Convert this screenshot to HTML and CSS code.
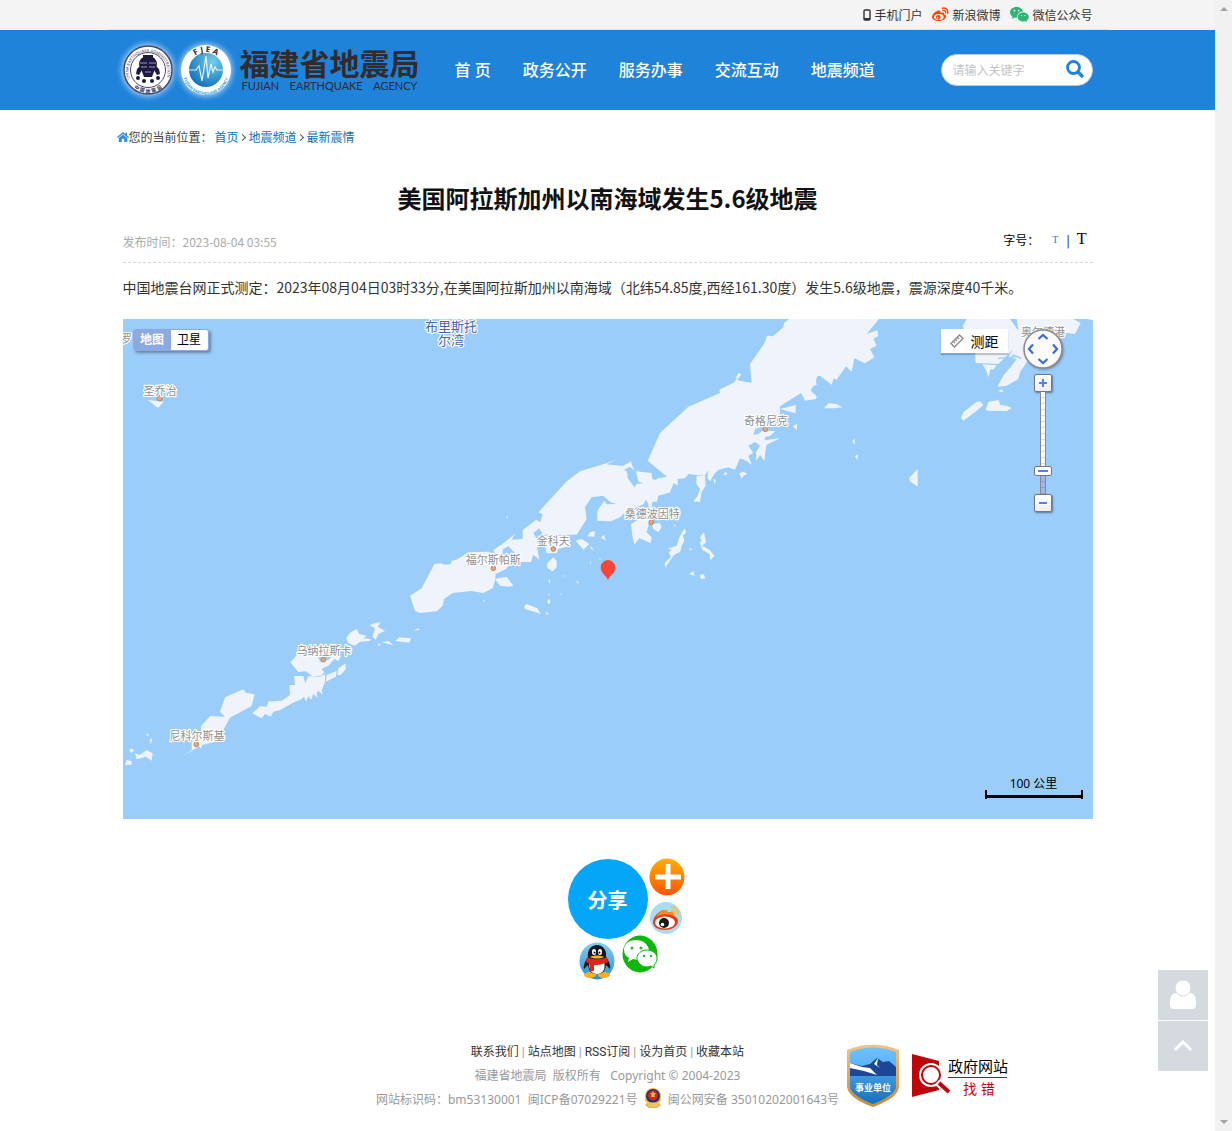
FILE: index.html
```html
<!DOCTYPE html>
<html lang="zh-CN">
<head>
    <meta charset="UTF-8">
    <meta name="viewport" content="width=device-width, initial-scale=1.0">
    <title>美国阿拉斯加州以南海域发生5.6级地震</title>
    <link rel="stylesheet" href="styles.css">
</head>
<body>
    <div class="page">
        <div class="topbar">
            <div class="wrap topbar-links">
                <a href="#"><svg width="8" height="12" viewBox="0 0 8 12"><rect x="1" y="1" width="6" height="10" rx="1" fill="none" stroke="#333" stroke-width="1.4"/><path d="M1 10h6" stroke="#333" stroke-width="2"/></svg>手机门户</a>
                <a href="#"><svg width="17" height="15" viewBox="0 0 17 15"><path d="M6.500 3.500C3.500 4 0 7.500 0 10c0 2.500 3.500 4 7 4 4 0 7-2.500 7-4.500 0-1.300-1-2-2-2.200.5-1.500-.5-2.300-3.500-1.200C9 4.300 8.200 3.200 6.500 3.500z" fill="#f40"/><ellipse cx="6.800" cy="10" rx="4.900" ry="3.100" fill="#f4f4f4"/><circle cx="6.200" cy="10.300" r="2.300" fill="#f40"/><circle cx="5.600" cy="10.700" r=".8" fill="#fff"/><path d="M10.500 1.200c3-.8 6 1.500 5.200 5M11 3.500c1.700-.4 3 .8 2.600 2.400" fill="none" stroke="#f40" stroke-width="1.400" stroke-linecap="round"/></svg>新浪微博</a>
                <a href="#"><svg width="19" height="16" viewBox="0 0 19 16"><path d="M6.500 0C2.800 0 0 2.300 0 5.300c0 1.800 1 3.200 2.500 4.200L1.800 12l2.700-1.500c.8.2 1.500.3 2.500.3C7 7 9.500 4.500 13 4.500 12.500 1.800 9.800 0 6.500 0z" fill="#2bb673"/><path d="M13.200 5.400c-3 0-5.500 2-5.500 4.500s2.500 4.500 5.500 4.500c.7 0 1.300-.1 1.900-.3l2 1.100-.5-1.900c1.300-.9 2.200-2 2.200-3.400 0-2.500-2.600-4.500-5.600-4.500z" fill="#2bb673"/><g fill="#f4f4f4"><circle cx="4.500" cy="3.700" r=".9"/><circle cx="8.700" cy="3.700" r=".9"/><circle cx="11.500" cy="8.600" r=".7"/><circle cx="15" cy="8.600" r=".7"/></g></svg>微信公众号</a>
            </div>
        </div>

        <header class="header">
            <div class="wrap header-inner">
                <a class="logo" href="#">
                    <svg class="seals" width="124" height="68" viewBox="0 0 124 68">
                        <defs>
                            <radialGradient id="glow"><stop offset=".7" stop-color="#b9dbf8" stop-opacity=".9"/><stop offset="1" stop-color="#1f83da" stop-opacity="0"/></radialGradient>
                            <radialGradient id="globe" cx=".7" cy=".25" r=".8"><stop offset="0" stop-color="#72cdec"/><stop offset="1" stop-color="#1573ba"/></radialGradient>
                            <path id="ring-a" d="M14 43A19.500 19.500 0 1 1 50 43"/>
                            <path id="ring-b" d="M12 45A23 23 0 0 0 52 45"/>
                            <path id="ring-c" d="M72 29A19 19 0 0 1 108 29"/>
                            <path id="ring-d" d="M67 36A23 23 0 0 0 113 36"/>
                        </defs>
                        <circle cx="32" cy="34" r="33" fill="url(#glow)"/>
                        <circle cx="90" cy="34" r="33" fill="url(#glow)"/>
                        <circle cx="32" cy="34" r="24" fill="#fff" stroke="#4a4668" stroke-width="1.500"/>
                        <circle cx="32" cy="34" r="17.500" fill="#fff" stroke="#4a4668"/>
                        <g fill="#1d1a42">
                            <ellipse cx="32" cy="28" rx="9" ry="8"/>
                            <path d="M27 19h10v4H27zM25 33h14l-3 8h-8z"/>
                            <path d="M21 33l3-3 2 4-3 5-3-1zM43 33l-3-3-2 4 3 5 3-1z"/>
                            <circle cx="22" cy="42" r="2"/><circle cx="28" cy="45" r="2"/><circle cx="36" cy="45" r="2"/><circle cx="42" cy="42" r="2"/>
                        </g>
                        <path d="M24 27h7M33 27h7M25 31h6M33 31h6M29 36h6" stroke="#9a98b5"/>
                        <text class="seal-text"><textPath href="#ring-a">CHINA EARTHQUAKE ADMINISTRATION</textPath></text>
                        <text class="seal-cn"><textPath href="#ring-b" startOffset="50%">中 国 地 震 局</textPath></text>
                        <circle cx="90" cy="34" r="25" fill="#fff"/>
                        <circle cx="90" cy="34" r="17" fill="url(#globe)"/>
                        <path d="M73 34h7l3-4 3 15 4-25 2 22 3-14 2 8 2-5 2 3h7" fill="none" stroke="#e4f5fc" stroke-width="1.200"/>
                        <text class="seal-fjea"><textPath href="#ring-c" startOffset="50%">F J E A</textPath></text>
                        <text class="seal-blue"><textPath href="#ring-d" startOffset="50%">FUJIAN EARTHQUAKE AGENCY</textPath></text>
                    </svg>
                    <span class="logo-name">
                        <span class="logo-cn">福建省地震局</span>
                        <span class="logo-en"><span>FUJIAN</span> <span>EARTHQUAKE</span> <span>AGENCY</span></span>
                    </span>
                </a>
                <nav class="nav">
                    <a href="#">首 页</a>
                    <a href="#">政务公开</a>
                    <a href="#">服务办事</a>
                    <a href="#">交流互动</a>
                    <a href="#">地震频道</a>
                </nav>
                <form class="search">
                    <input type="text" placeholder="请输入关键字" aria-label="请输入关键字">
                    <button type="button" aria-label="搜索"><svg width="18" height="18" viewBox="0 0 18 18"><circle cx="7.500" cy="7.500" r="6" fill="none" stroke="#1f83da" stroke-width="2.800"/><path d="M12 12l4 4" stroke="#1f83da" stroke-width="3.200" stroke-linecap="round"/></svg></button>
                </form>
            </div>
        </header>

        <main class="wrap">
            <div class="crumbs">
                <svg width="12" height="10" viewBox="0 0 12 10"><path d="M6 0l2.500 2V.8H10v2.500L12 5l-.8.9L6 1.700.8 5.900 0 5z" fill="#2f8ee5"/><path d="M6 2.600l4.200 3.400v4H7.200V6.800H4.800V10H1.800V6z" fill="#2f8ee5"/></svg>
                <span>您的当前位置：</span>
                <a href="#">首页</a><i></i><a href="#">地震频道</a><i></i><a href="#">最新震情</a>
            </div>

            <article class="article">
                <h1>美国阿拉斯加州以南海域发生5.6级地震</h1>
                <div class="meta">
                    <span class="date">发布时间：2023-08-04 03:55</span>
                    <span class="size">字号：<button type="button" class="small">T</button>|<button type="button" class="big">T</button></span>
                </div>
                <p>中国地震台网正式测定：2023年08月04日03时33分,在美国阿拉斯加州以南海域（北纬54.85度,西经161.30度）发生5.6级地震，震源深度40千米。</p>

                <div class="map">
                    <svg class="map-canvas" viewBox="0 0 2910 1500">
                        <rect width="2910" height="1500" fill="#9acdf9"/>
                        <g fill="#eff3fb">
                            <path d="M75 243l47 5-17 19z"/>
                            <!-- peninsula, north part -->
                            <path d="M1574 425L1611 342 1696 263 1791 222 1789 212 1834 190 1841 178 1848 185 1886 191 1881 135 1926 70 1932 50 1950 52 1981 25 1983 12 1998 0H2268L2231 45 2263 34 2266 50 2251 60 2261 80 2241 90 2254 115 2226 133 2194 118 2186 158 2169 142 2141 182 2132 178 2126 197 2091 170 2083 172 2079 184 2081 197 2070 202 2063 215 2081 232 2079 240 2046 245 2034 222 1971 262V288L1936 292 1926 318 1897 330 1891 347 1906 345 1918 335 1957 336 1940 352 1927 353 1926 364 1972 357 1930 378 1924 426 1912 408 1900 425 1899 400 1911 380 1896 369 1876 380 1891 402 1876 410 1886 438 1870 425 1851 418 1836 452 1816 445 1788 452 1776 462 1761 487 1753 478 1755 454 1745 470 1696 465 1686 478 1664 480 1664 500 1652 492 1641 520 1601 528 1605 540 1585 553 1588 580 1569 540 1558 556 1500 565 1540 495 1586 490 1605 478 1632 473z"/>
                            <g transform="translate(831 0)">
                                <!-- peninsula, middle part -->
                                <path d="M415 580L500 487 540 457 612 435 650 422 620 436 668 441 693 427 697 440 704 455 690 443 672 452 681 458 683 477 705 507 712 495 727 510 728 492 715 488 708 457 755 462 757 480 790 490 810 500V520L775 530 770 550 757 545 752 580 740 540 730 556 675 580 660 595 633 607 592 605V575L613 545 620 556 650 555 632 550 610 530 575 535 555 565 560 600 530 647H430L412 620 420 612 428 585z"/>
                                <path d="M890 470h25l2 30-12 20-5 28h-20l13-18 7-20-11-15zM940 480l7 2-2 15zM970 468l6-10 8 8zM1018 463l14-5 10 7-12 5-5 10z"/>
                                <path d="M30 830l35-22 38-73 17-2 15 4 18-2 2-10 15-3 35-22 60-2 25 17 40 20-12 15-31 15-2 20-7 23-28 14-35-6-57 6-26 18-4 20-18 17-50 5-15-6zM280 693l30-20 35-28-10 17 33-2v-28l15-10 25-20 20 12-12 15-16 13 12 20v25l6 35-18-15-7 22h-33l-15-27-20-20-15 8-13 40z"/>
                                <path d="M412 650h88l12 30-37 10-5 13h-30l-5-23zM440 735l20-20 10 10v20l-12 12-16-10zM285 780l35-7 20 27-15 3-25-3zM527 665l18-5 23 15-18 17zM562 652l8-12 15-3-2 16zM603 655l10-7 4 17zM570 680l12 12-9-1z"/>
                                <path d="M372 862l8-7 32 13 10 16-47-14zM693 615l57-35-5 40-5 20 15 15-3 17-34-14-15 19-6-27zM755 615l25-3 5 13-10 15-15-10zM853 628l6 12-10 10 4 15-8 15-4 18-18 9-12 16-15 24-2-15 19-19-7-12 10-9-14-3 28-9 8-25zM900 655l12-15 6 30-12 10 24 13 13 18-12 13-2-18-22-14-8-22 6-4zM867 765l13-8 4 13zM900 767l12-2 3 14h-13z"/>
                                <path d="M445 780l6 6-3 8zM487 767l4 3v6zM528 786l8 2-1 7zM441 847l7-7 4 8-6 8zM436 878l12 6-8 3zM478 823l9 1-4 3zM446 820l3 4-2 9zM249 842l5 1-1 9zM318 594l5-4v9zM598 718l4 2-2 5zM570 728l3 3-3 6zM819 616l8 4-1 5zM867 687l9 3-5 5zM1008 175l8-12 8 2-10 15z"/>
                            </g>
                            <g transform="translate(1851 0)">
                                <path d="M120 270l47-12v25zM252 268l13-15 25 2 17 10-27 3zM158 322l13-7v17zM337 367l7-9v20zM345 413l8-8v18zM507 477l26-27v53l-23-16zM663 297l7-17 38-30 12-3 10 11-20 17-40 30zM737 272l8-24 32-5 3 15 20 2 15 7-15 9-55-1z"/>
                                <path d="M668 22l12-22h130l25 34-5-34h170l22 12-17 33-45-5-60 60-40 30-20 30-5 20-35 20-28 3 18-33 25-30 15-20-25-5 15-25-45 45-68-3-2-32zM728 136l42 3-10 13-8-2-7 25-6-20zM775 217l10-7 6 10zM1040 0h19v4z"/>
                            </g>
                            <!-- western islands -->
                            <g transform="translate(-9 723)">
                                <path d="M678 235l12-17 20-11 8 15 22 6-10 7 22 2-2 6-30 2-15 12-20-7zM748 195l17-5 17-4-9 14 22 13-20 9-8 18-10-10 8-25zM826 243l12-11 35 3-5 13zM785 247l20-4 15 12-15-3zM882 212l11-7 7 4zM772 257l5-7 5 6z"/>
                                <path d="M511 307l24-27h55l10 25 25-5 25-25 12 15-7 13-12-6-18 20-20 10 8 10-10 10-26 2-20-15-22 2z"/>
                                <path d="M522 348H550L556 370 565 348 600 350 615 342V365L605 392 608 405 596 392 590 398 592 413 580 402 573 420 566 408 558 425 552 410 540 420 525 425 480 450 460 455 452 470 435 462 425 475 397 460 420 438 440 440 446 424 462 424 485 422 510 405 508 375 525 375zM618 365l2-20 30-12-2 17-20 10zM652 345l3-20 22-15v18l-15 17z"/>
                                <path d="M300 455l15-43 55-24 8 10 26 5-9 35-65 35-20 37-25 35-38 10-4 12-5-8-48 29 25-18v-25l28-15v-32l27-30 45 2zM45 580l15 5 20-15 18 10-3 22-17-12-28 8zM15 615l5-15 15 3v11zM27 570l8-5 8 7-10 6zM88 540l9-7-4 20zM78 525l6-5 2 8z"/>
                            </g>
                        </g>
                        <path d="M2625 118l60-5M2650 138l20-30 25 10M2550 60l30 15M2665 0l20 30" stroke="#9acdf9" stroke-width="4" fill="none"/>
                        <g fill="#e3a680" stroke="#b98561" stroke-width="3">
                            <circle cx="110" cy="238" r="8"/><circle cx="1111" cy="748" r="7"/><circle cx="1291" cy="690" r="7"/><circle cx="1585" cy="610" r="7"/><circle cx="1927" cy="331" r="7"/><circle cx="601" cy="1022" r="7"/><circle cx="220" cy="1276" r="7"/>
                        </g>
                        <g class="place">
                            <text x="10" y="72">罗</text>
                            <text x="111" y="229">圣乔治</text>
                            <text x="1929" y="319">奇格尼克</text>
                            <text x="1588" y="597">桑德波因特</text>
                            <text x="1291" y="677">金科夫</text>
                            <text x="1111" y="735">福尔斯帕斯</text>
                            <text x="603" y="1007">乌纳拉斯卡</text>
                            <text x="222" y="1262">尼科尔斯基</text>
                            <text x="2760" y="51">奥尔德港</text>
                        </g>
                        <g class="place bay">
                            <text x="984" y="36">布里斯托</text>
                            <text x="984" y="79">尔湾</text>
                        </g>
                        <path d="M1455 783c-4-12-22-20-22-38a22 22 0 1 1 44 0c0 18-18 26-22 38z" fill="#fa4437"/>
                    </svg>
                    <div class="map-type">
                        <button type="button" class="active">地图</button><button type="button">卫星</button>
                    </div>
                    <button type="button" class="measure"><svg width="14" height="14" viewBox="0 0 14 14"><path d="M1 9.500L9.500 1 13 4.500 4.500 13zM3.500 7.500L5 9M5.500 5.500L7 7M7.500 3.500L9 5" fill="none" stroke="#8c8c8c" stroke-width="1.400"/></svg>测距</button>
                    <div class="map-nav">
                        <svg class="pan" width="40" height="40" viewBox="0 0 40 40"><circle cx="20" cy="20" r="19" fill="#fafafa" stroke="#8a8a8a" stroke-width="1.500"/><path d="M15.500 10l4.500-4 4.500 4M15.500 30l4.500 4 4.500-4M10 15.500L6 20l4 4.500M30 15.500l4 4.500-4 4.500" fill="none" stroke="#3c6bd3" stroke-width="2.200"/></svg>
                        <button type="button" aria-label="放大"><svg width="8" height="8" viewBox="0 0 8 8"><path d="M0 4h8M4 0v8" stroke="#4f82ea" stroke-width="2"/></svg></button>
                        <input type="range" min="3" max="18" value="6" aria-label="缩放级别">
                        <button type="button" aria-label="缩小"><svg width="8" height="8" viewBox="0 0 8 8"><path d="M0 4h8" stroke="#4f82ea" stroke-width="2"/></svg></button>
                    </div>
                    <div class="map-scale">100 公里<i></i></div>
                </div>
            </article>

            <div class="share">
                <a class="share-main" href="#">分享</a>
                <a class="share-item more" href="#" aria-label="更多"><svg width="36" height="38" viewBox="0 0 36 38"><defs><linearGradient id="orange" x2="0" y2="1"><stop stop-color="#ffae00"/><stop offset="1" stop-color="#ff5400"/></linearGradient></defs><ellipse cx="18" cy="19" rx="17.500" ry="18.500" fill="url(#orange)"/><path d="M6 19h26M19 6v25" stroke="#fff" stroke-width="5"/></svg></a>
                <a class="share-item weibo" href="#" aria-label="新浪微博"><svg width="34" height="34" viewBox="0 0 34 34"><circle cx="17" cy="17" r="16" fill="#a9dcee"/><path d="M4 21c0-5 6-11 11-12 3 0 3 2 3 3 5-2 8-1 7 3 3 1 4 3 4 5 0 5-6 9-13 9S4 26 4 21z" fill="#e93a18"/><path d="M7 16c3-5 7-7 9-7 3 0 3 2 3 3 4-2 7-1 6 3-7-3-13-2-18 1z" fill="#fb8a20"/><ellipse cx="16" cy="21.500" rx="10" ry="6" fill="#fff"/><circle cx="15" cy="22" r="5" fill="#18191c"/><circle cx="13.500" cy="23.500" r="1.800" fill="#fff"/><path d="M22 6c5 0 8 4 7 9M22 10c3 0 4 2 4 4" fill="none" stroke="#f3c14a" stroke-width="2"/></svg></a>
                <a class="share-item wechat" href="#" aria-label="微信"><svg width="36" height="38" viewBox="0 0 36 38"><ellipse cx="18" cy="19" rx="17.500" ry="18.500" fill="#0cb80c"/><path d="M14 5C7 5 2 9 2 15c0 4 2 6 5 8l-1 4 5-3 5 1c0-6 4-10 11-10C26 9 21 5 14 5z" fill="#fff"/><path d="M25 15c-6 0-10 4-10 8s4 9 10 9l4-1 3 2v-3c2-2 3-4 3-7 0-4-4-8-10-8z" fill="#fff" stroke="#0cb80c"/><g fill="#2fb52f"><circle cx="10" cy="13" r="1.500"/><circle cx="19" cy="13" r="1.500"/><circle cx="22" cy="21" r="1.200"/><circle cx="29" cy="21" r="1.200"/></g></svg></a>
                <a class="share-item qq" href="#" aria-label="QQ"><svg width="36" height="38" viewBox="0 0 36 38"><defs><linearGradient id="sky" x2="0" y2="1"><stop stop-color="#7fd0f5"/><stop offset="1" stop-color="#2b8fd0"/></linearGradient></defs><ellipse cx="18" cy="19" rx="17.500" ry="18.500" fill="url(#sky)"/><ellipse cx="11" cy="33" rx="6" ry="3" fill="#fbb01c"/><ellipse cx="25" cy="33" rx="6" ry="3" fill="#fbb01c"/><path d="M18 3c-6 0-10 5-9 12-3 4-5 9-4 12l4-4c1 7 4 9 9 9s8-2 9-9l4 4c1-3-1-8-4-12 1-7-3-12-9-12z" fill="#16171d"/><path d="M11 19h14c2 8-1 13-7 13s-9-5-7-13z" fill="#fff"/><path d="M8 15c6 3 14 3 20 0l1 5c-7 3-10 3-14 3v6h-4v-7l-4-2z" fill="#e32319"/><ellipse cx="15" cy="10" rx="2" ry="3" fill="#fff"/><ellipse cx="21" cy="10" rx="2" ry="3" fill="#fff"/><circle cx="15.500" cy="10.500" r="1"/><circle cx="20.500" cy="10.500" r="1"/><path d="M11 15c4-2 10-2 14 0-4 2-10 2-14 0z" fill="#ffb320"/></svg></a>
            </div>
        </main>

        <footer class="footer">
            <div class="footer-text">
                <div class="footer-links"><a href="#">联系我们</a> | <a href="#">站点地图</a> | <a href="#">RSS订阅</a> | <a href="#">设为首页</a> | <a href="#">收藏本站</a></div>
                <div>福建省地震局&nbsp; 版权所有 &nbsp; Copyright © 2004-2023</div>
                <div>网站标识码：bm53130001&nbsp; 闽ICP备07029221号
                    <svg class="police" width="20" height="20" viewBox="0 0 20 20"><path d="M1 11l3 4-2 2 4 3h8l4-3-2-2 3-4-3 1H4z" fill="#e8b04a"/><circle cx="10" cy="8" r="8" fill="#e9b33c"/><circle cx="10" cy="8" r="7" fill="#1d3577"/><circle cx="10" cy="7.500" r="5" fill="#d8231c"/><path d="M10 3l1 2h2l-1.500 1.500L12 9h-4l.5-2.500L7 5h2z" fill="#f2bd3b"/><path d="M3 13c4 2 10 2 14 0l-3 6H6z" fill="#f0c25d"/></svg>
                    闽公网安备 35010202001643号</div>
            </div>
            <div class="badges">
                <a href="#"><svg width="54" height="64" viewBox="0 0 54 64"><defs><linearGradient id="gold" x2="0" y2="1"><stop stop-color="#f3c384"/><stop offset="1" stop-color="#c88a42"/></linearGradient><linearGradient id="sea" x2="0" y2="1"><stop stop-color="#6ec2ff"/><stop offset=".48" stop-color="#53aaf0"/><stop offset=".5" stop-color="#3d98dc"/><stop offset="1" stop-color="#1671bd"/></linearGradient></defs><path d="M1 6C17-1 37-1 53 6v36c0 10-15 17-26 21C16 59 1 52 1 42z" fill="url(#gold)"/><path d="M4 8c15-6 31-6 46 0v34c0 8-13 14-23 18C17 56 4 50 4 42z" fill="url(#sea)"/><path d="M4 19l12 3 8-2 7-6 6 4 6-1 7 6v9H4z" fill="#1b4796"/><path d="M4 19l12 4 8 1 7 7-13-4-14-3zM28 20l4-6-1 7 3 3z" fill="#fff"/><text x="27" y="47" class="badge-text">事业单位</text></svg></a>
                <a href="#"><svg width="100" height="46" viewBox="0 0 100 46"><path d="M1 1l27 7v29L1 44z" fill="#be0509"/><circle cx="20" cy="22" r="12" fill="#fff"/><circle cx="20" cy="22" r="9" fill="#fff" stroke="#be0509" stroke-width="2"/><path d="M26 29l12 11" stroke="#fff" stroke-width="7"/><path d="M28 30l10 9" stroke="#be0509" stroke-width="4"/><path d="M37 24.500h59" stroke="#be0509"/><text x="37" y="19" class="report-top">政府网站</text><text x="52" y="41" class="report-bottom">找 错</text></svg></a>
            </div>
        </footer>
    </div>

    <div class="scrollbar"><span class="up"></span><span class="down"></span></div>

    <div class="side">
        <button type="button" aria-label="用户"><svg width="28" height="30" viewBox="0 0 28 30"><path d="M7 13c-4 0-6 4-6 9v3c0 3 2 4 4 4h18c2 0 4-1 4-4v-3c0-5-2-9-6-9z" fill="#fff"/><circle cx="14" cy="8" r="8" fill="#fff" stroke="#d4dae0"/></svg></button>
        <button type="button" aria-label="返回顶部"><svg width="20" height="12" viewBox="0 0 20 12"><path d="M2 10l8-8 8 8" fill="none" stroke="#fff" stroke-width="3"/></svg></button>
    </div>
</body>
</html>
```
FILE: styles.css
```css
* {
    box-sizing: border-box;
}
body {
    display: grid;
    grid-template-columns: 1fr 17px;
    min-height: 100vh;
    margin: 0;
    background: #fff;
    color: #333;
    font-family: "Noto Sans", "Noto Sans CJK SC", sans-serif;
    font-size: 12px;
}
a {
    color: inherit;
    text-decoration: none;
}
button {
    padding: 0;
    border: none;
    background: none;
    font-family: inherit;
    cursor: pointer;
}
svg {
    flex: none;
}
.wrap {
    max-width: 1000px;
    margin: 0 auto;
    padding: 0 15px;
}

/* top */
.topbar {
    background: #f4f4f4;
}
.topbar-links {
    display: flex;
    justify-content: flex-end;
    gap: 10px;
    height: 30px;
    border-bottom: 1px solid #d3e3f1;
}
.topbar-links a {
    display: flex;
    align-items: center;
    gap: 3px;
}
.header {
    background: #1f83da;
}
.header-inner {
    display: flex;
    align-items: center;
    height: 80px;
}
.logo {
    display: flex;
    align-items: center;
    margin-left: -7px;
    color: #322a2c;
}
.seals {
    overflow: visible;
}
.logo-name {
    display: flex;
    flex-direction: column;
}
.logo-cn {
    font-size: 30px;
    font-weight: bold;
    line-height: 32px;
}
.logo-en {
    display: flex;
    justify-content: space-between;
    padding: 0 2px;
    font-family: Lato, sans-serif;
    font-size: 11px;
    line-height: 12px;
}
.seal-text {
    font-size: 4px;
    fill: #39345c;
}
.seal-cn {
    font-size: 5px;
    font-weight: bold;
    fill: #39345c;
    text-anchor: middle;
}
.seal-fjea {
    font-size: 8px;
    font-weight: bold;
    fill: #322a2c;
    text-anchor: middle;
}
.seal-blue {
    font-size: 4px;
    font-weight: bold;
    fill: #2aa0dc;
    text-anchor: middle;
}
.nav {
    display: flex;
    flex: 1;
    gap: 32px;
    margin-left: 35px;
    padding-bottom: 2px;
    color: #fff;
    font-size: 16px;
    font-weight: 500;
    white-space: nowrap;
}
.search {
    display: flex;
    align-items: center;
    width: 152px;
    height: 32px;
    padding: 0 8px 0 11px;
    border: 1px solid #bccbd8;
    border-radius: 16px;
    background: #fff;
}
.search input {
    flex: 1;
    min-width: 0;
    padding: 0;
    border: none;
    outline: none;
    background: none;
    font-family: inherit;
    font-size: 12px;
}
.search input::placeholder {
    color: #c4c4c4;
}
.search button {
    height: 20px;
}

/* article */
.crumbs {
    display: flex;
    align-items: center;
    height: 54px;
    margin-left: -6px;
    color: #444;
}
.crumbs a {
    color: #0b72bd;
}
.crumbs span {
    margin-right: 2px;
}
.crumbs i {
    width: 5px;
    height: 5px;
    margin: 0 4px 0 1px;
    border: solid #555;
    border-width: 1px 1px 0 0;
    transform: rotate(45deg);
}
.article h1 {
    margin: 0;
    padding: 16px 0 18px;
    color: #111;
    font-family: "Noto Sans CJK SC", sans-serif;
    font-size: 24px;
    line-height: 36px;
    text-align: center;
}
.meta {
    display: flex;
    align-items: center;
    justify-content: space-between;
    height: 29px;
    border-bottom: 1px dashed #d5d5d5;
    padding-bottom: 18px;
    font-family: "Noto Sans CJK SC", sans-serif;
}
.date {
    color: #aaa;
    padding-top: 4px;
}
.size {
    display: flex;
    align-items: center;
    padding-right: 6px;
    color: #000;
}
.size button {
    font-family: "Liberation Serif", serif;
}
.size .small {
    margin: 0 8px 0 13px;
    color: #1f83da;
    font-size: 10px;
}
.size .big {
    margin-left: 7px;
    font-size: 16px;
}
.article p {
    margin: 0;
    padding: 10px 0 18px;
    font-family: "Noto Sans CJK SC", sans-serif;
    font-size: 14px;
    line-height: 28px;
}

/* map */
.map {
    position: relative;
}
.map-canvas {
    display: block;
    width: 100%;
}
.place text {
    font-size: 33px;
    fill: #8f8f8f;
    stroke: #fff;
    stroke-width: 7px;
    stroke-linejoin: round;
    paint-order: stroke;
    text-anchor: middle;
}
.bay text {
    font-size: 39px;
    fill: #4268b0;
}
.map-type {
    position: absolute;
    top: 10px;
    left: 10px;
    display: flex;
    border: 1px solid #8ea8e0;
    border-radius: 3px;
    background: #fff;
    box-shadow: 2px 2px 3px rgba(0, 0, 0, 0.35);
}
.map-type button {
    width: 37px;
    height: 20px;
    color: #000;
    font-size: 12px;
    line-height: 18px;
}
.map-type .active {
    background: #8ea8e0;
    color: #fff;
    font-weight: bold;
}
.measure {
    position: absolute;
    top: 10px;
    right: 85px;
    display: flex;
    align-items: center;
    justify-content: center;
    gap: 7px;
    width: 67px;
    height: 24px;
    background: #fff;
    box-shadow: 0 2px 1px rgba(0, 0, 0, 0.2);
    color: #000;
    font-size: 14px;
}
.map-nav {
    position: absolute;
    top: 10px;
    right: 30px;
    display: flex;
    flex-direction: column;
    align-items: center;
}
.pan {
    margin-bottom: 5px;
    filter: drop-shadow(1px 1px 1px rgba(0, 0, 0, 0.3));
}
.map-nav button {
    display: flex;
    align-items: center;
    justify-content: center;
    width: 18px;
    height: 18px;
    border: 1px solid #777;
    border-radius: 2px;
    background: linear-gradient(#fff, #eee);
    box-shadow: 1px 1px 2px rgba(0, 0, 0, 0.4);
}
.map-nav input {
    width: 18px;
    height: 102px;
    margin: 0;
    appearance: none;
    background: none;
    writing-mode: vertical-lr;
    direction: rtl;
}
.map-nav input::-webkit-slider-runnable-track {
    width: 6px;
    height: 100%;
    border: solid #888;
    border-width: 0 1px;
    background:
        repeating-linear-gradient(transparent 0 5px, rgba(0, 0, 0, 0.12) 5px 6px),
        linear-gradient(#f8f8f8 75%, #9bb5f5 75%);
}
.map-nav input::-webkit-slider-thumb {
    width: 18px;
    height: 10px;
    margin-left: -7px;
    appearance: none;
    border: 1px solid #777;
    border-radius: 2px;
    background: linear-gradient(#4f82ea, #4f82ea) center / 10px 2px no-repeat #fff;
}
.map-scale {
    position: absolute;
    right: 10px;
    bottom: 20px;
    width: 98px;
    color: #000;
    line-height: 12px;
    text-align: center;
}
.map-scale i {
    display: block;
    height: 9px;
    border: solid #000;
    border-width: 0 2px;
    background: linear-gradient(#000, #000) 0 5px / 100% 3px no-repeat;
}

/* share */
.share {
    position: relative;
    width: 80px;
    height: 120px;
    margin: 40px auto 61px;
}
.share-main {
    display: flex;
    align-items: center;
    justify-content: center;
    width: 80px;
    height: 80px;
    border-radius: 50%;
    background: #04a6f7;
    color: #fff;
    font-size: 20px;
    font-weight: bold;
}
.share-item {
    position: absolute;
}
.share-item svg {
    display: block;
}
.more {
    top: -1px;
    left: 81px;
}
.weibo {
    top: 42px;
    left: 81px;
}
.wechat {
    top: 76px;
    left: 54px;
}
.qq {
    top: 83px;
    left: 11px;
}

/* footer */
.footer {
    display: grid;
    grid-template-columns: 1fr auto 1fr;
    color: #999;
    line-height: 24px;
    text-align: center;
}
.footer-text {
    grid-column: 2;
}
.footer-links {
    font-family: Roboto, "Noto Sans CJK SC", sans-serif;
}
.footer-links a {
    color: #333;
}
.police {
    margin: 0 2px;
    vertical-align: -4px;
}
.badges {
    display: flex;
    align-items: center;
    gap: 11px;
    padding-left: 7px;
}
.badges svg {
    display: block;
}
.badge-text {
    fill: #fff;
    font-size: 9px;
    font-weight: bold;
    text-anchor: middle;
}
.report-top {
    font-size: 15px;
    fill: #000;
}
.report-bottom {
    font-size: 14px;
    fill: #be0509;
}

/* right edge */
.scrollbar {
    display: flex;
    flex-direction: column;
    align-items: center;
    justify-content: space-between;
    padding: 7px 0;
    background: #f1f1f1;
}
.scrollbar span {
    border: 4px solid transparent;
}
.scrollbar .up {
    border-top: 0;
    border-bottom-color: #a3a3a3;
}
.scrollbar .down {
    border-bottom: 0;
    border-top-color: #a3a3a3;
}
.side {
    position: fixed;
    right: 24px;
    bottom: 60px;
    display: grid;
    gap: 1px;
}
.side button {
    display: flex;
    align-items: center;
    justify-content: center;
    width: 50px;
    height: 50px;
    background: #d4dae0;
}
```
